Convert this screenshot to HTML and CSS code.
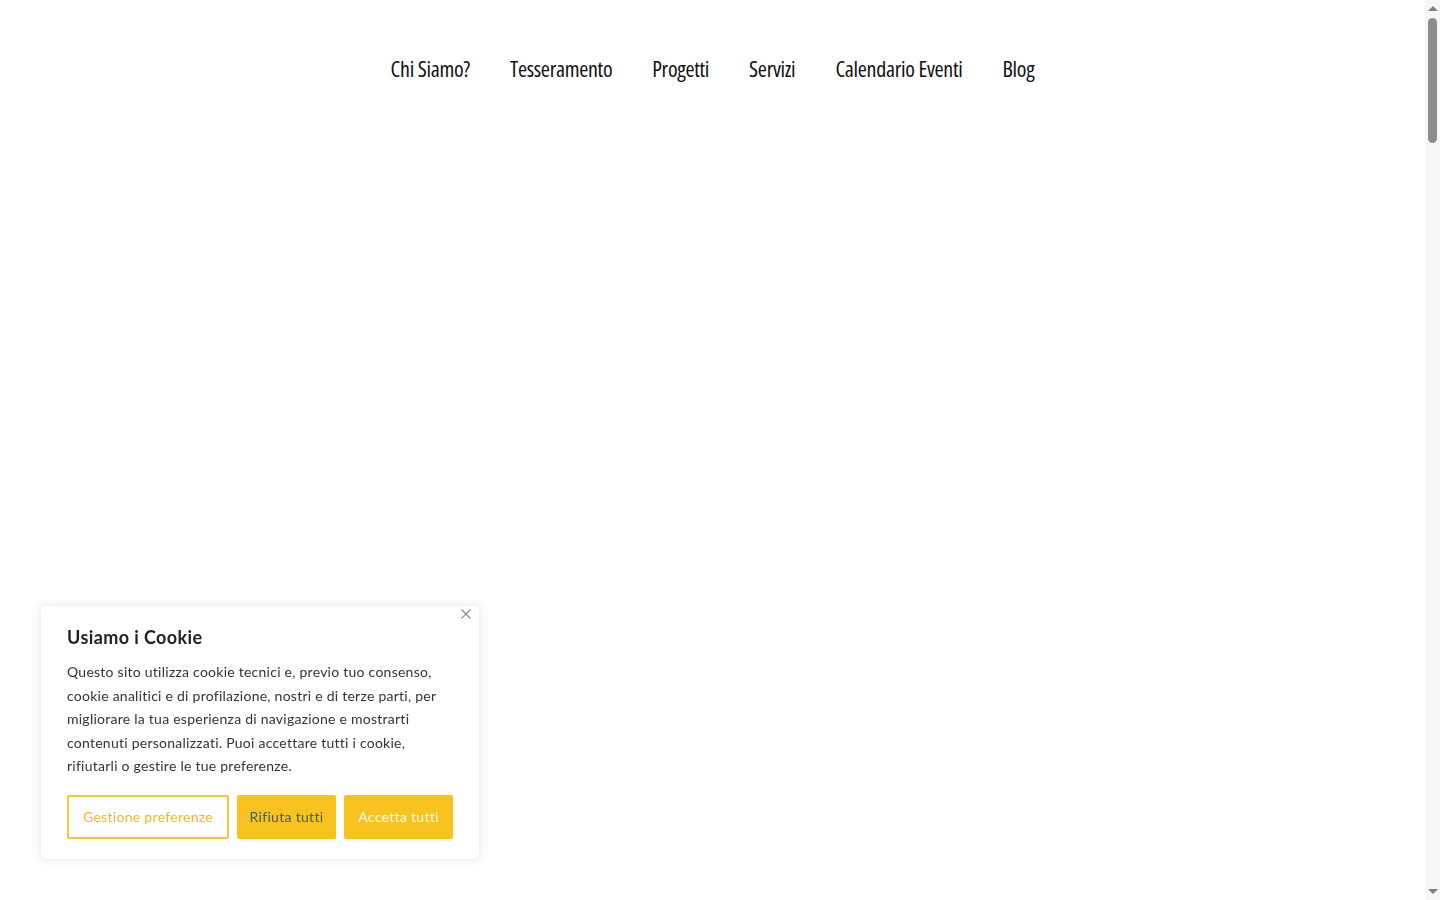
FILE: index.html
```html
<!DOCTYPE html>
<html lang="it">
<head>
<meta charset="utf-8">
<title>Home</title>
<link rel="stylesheet" href="styles.css">
</head>
<body>
<header class="site-header">
  <nav class="main-nav">
    <a href="#">Chi Siamo?</a>
    <a href="#">Tesseramento</a>
    <a href="#">Progetti</a>
    <a href="#">Servizi</a>
    <a href="#">Calendario Eventi</a>
    <a href="#">Blog</a>
  </nav>
</header>
<main class="page-body"></main>

<div class="cookie-banner">
  <button class="cookie-close" aria-label="Chiudi">
    <svg width="10" height="10" viewBox="0 0 10 10"><path d="M0.5 0.5L9.5 9.5M9.5 0.5L0.5 9.5" stroke="#8a8a8a" stroke-width="1.1" fill="none"/></svg>
  </button>
  <h2 class="cookie-title">Usiamo i Cookie</h2>
  <p class="cookie-text">Questo sito utilizza cookie tecnici e, previo tuo consenso, cookie analitici e di profilazione, nostri e di terze parti, per migliorare la tua esperienza di navigazione e mostrarti contenuti personalizzati. Puoi accettare tutti i cookie, rifiutarli o gestire le tue preferenze.</p>
  <div class="cookie-actions">
    <button class="btn btn-outline">Gestione preferenze</button>
    <button class="btn btn-reject">Rifiuta tutti</button>
    <button class="btn btn-accept">Accetta tutti</button>
  </div>
</div>

<div class="fake-scrollbar" aria-hidden="true">
  <span class="sb-arrow sb-up"></span>
  <span class="sb-thumb"></span>
  <span class="sb-arrow sb-down"></span>
</div>
</body>
</html>
```
FILE: styles.css
```css
html, body {
  margin: 0;
  padding: 0;
  background: #ffffff;
}
body {
  font-family: "Lato", "Open Sans", sans-serif;
  padding-right: 15px;
}
.site-header {
  display: flex;
  justify-content: center;
  padding-top: 53px;
}
.main-nav {
  display: flex;
  gap: 40px;
}
.main-nav a {
  font-family: "Open Sans", "DejaVu Sans Condensed", sans-serif;
  font-stretch: 75%;
  font-weight: 500;
  font-size: 22px;
  letter-spacing: -0.3px;
  line-height: 30px;
  color: #111111;
  text-decoration: none;
}
.page-body {
  min-height: 6180px;
}
.cookie-banner {
  position: fixed;
  left: 41px;
  top: 606px;
  width: 386px;
  padding: 18px 26px 20px 26px;
  background: #ffffff;
  border-radius: 4px;
  box-shadow: 0 0 10px rgba(0,0,0,0.12);
}
.cookie-close {
  position: absolute;
  top: -1px;
  right: 4px;
  width: 18px;
  height: 18px;
  padding: 0;
  border: 0;
  background: transparent;
  display: flex;
  align-items: center;
  justify-content: center;
}
.cookie-title {
  margin: 0 0 10px 0;
  font-size: 18px;
  line-height: 26px;
  font-weight: 700;
  letter-spacing: 0.4px;
  color: #222222;
}
.cookie-text {
  margin: 0 0 17px 0;
  font-size: 14px;
  line-height: 23.5px;
  letter-spacing: 0.25px;
  color: #333333;
}
.cookie-actions {
  display: flex;
  gap: 8px;
}
.btn {
  height: 44px;
  padding: 0;
  font-family: "Lato", "Open Sans", sans-serif;
  font-size: 14px;
  letter-spacing: 0.3px;
  border-radius: 2px;
  cursor: pointer;
}
.btn-outline {
  width: 162px;
  background: #ffffff;
  border: 2px solid #f5c53c;
  color: #f1bb1c;
}
.btn-reject {
  width: 99px;
  background: #f8c21f;
  border: 0;
  color: #3d5b7c;
}
.btn-accept {
  width: 109px;
  background: #f8c21f;
  border: 0;
  color: #ffffff;
}
.fake-scrollbar {
  position: fixed;
  top: 0;
  right: 0;
  width: 15px;
  height: 900px;
  background: #f7f7f7;
  display: flex;
  flex-direction: column;
  align-items: center;
}
.sb-arrow {
  width: 0;
  height: 0;
  border-left: 5px solid transparent;
  border-right: 5px solid transparent;
}
.sb-up {
  margin-top: 6px;
  border-bottom: 5px solid #7f7f7f;
}
.sb-thumb {
  margin-top: 7px;
  width: 9px;
  height: 125px;
  border-radius: 5px;
  background: #8c8c8c;
}
.sb-down {
  margin-top: auto;
  margin-bottom: 6px;
  border-top: 5px solid #7f7f7f;
}
```
